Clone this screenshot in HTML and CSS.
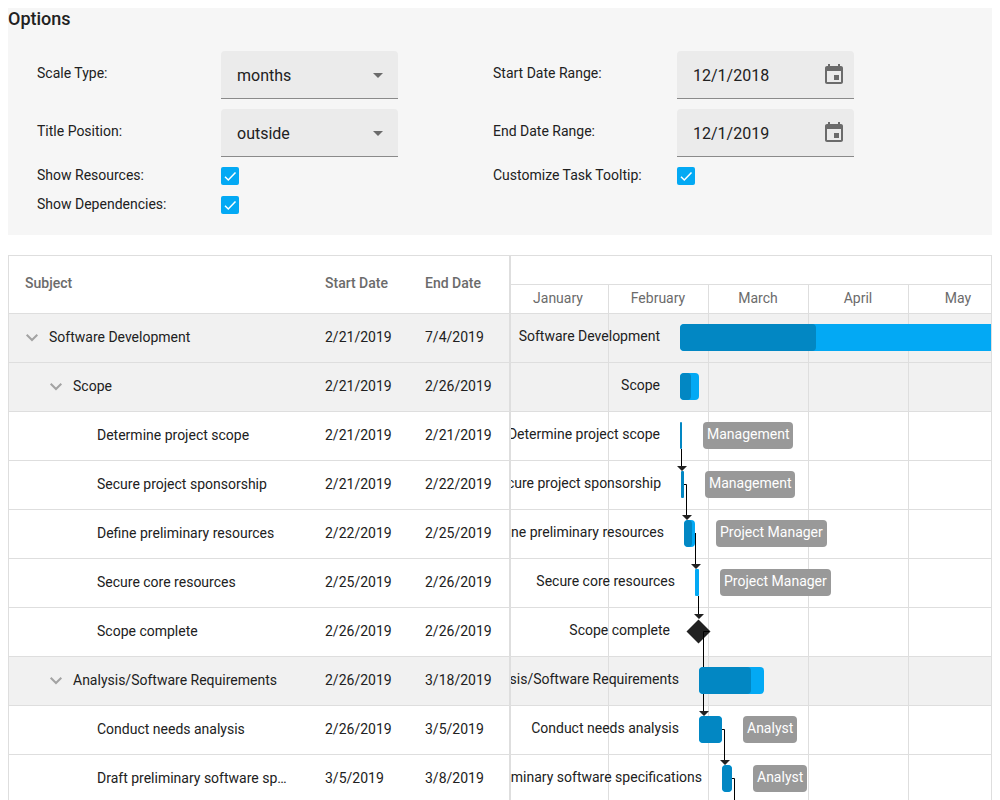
FILE: index.html
```html
<!DOCTYPE html>
<html lang="en">
<head>
<meta charset="utf-8">
<meta name="viewport" content="width=device-width, initial-scale=1">
<title>Gantt</title>
<link rel="stylesheet" href="styles.css">
</head>
<body>
<svg class="defs" aria-hidden="true">
  <symbol id="event" viewBox="0 0 24 24"><path d="M17 12h-5v5h5v-5zM16 1v2H8V1H6v2H5c-1.11 0-1.99.9-1.99 2L3 19c0 1.1.89 2 2 2h14c1.1 0 2-.9 2-2V5c0-1.100-.9-2-2-2h-1V1h-2zm3 18H5V8h14v11z"/></symbol>
  <symbol id="drop" viewBox="0 0 10 5"><path d="M0 0h10L5 5z"/></symbol>
  <symbol id="check" viewBox="0 0 18 18"><path d="M4 9.700l3.300 3.300L14.500 5.500" fill="none" stroke="#fff" stroke-width="1.500"/></symbol>
  <symbol id="chevron" viewBox="0 0 14 14"><path d="M1.700 3.700L7 9l5.300-5.300" fill="none" stroke="#a3a3a3" stroke-width="2"/></symbol>
</svg>

<form class="options">
  <h1 class="options-title">Options</h1>
  <div class="options-columns">
    <div class="options-column">
      <div class="option">
        <label class="option-label" for="scale">Scale Type:</label>
        <div class="field">
          <select class="field-input" id="scale"><option>months</option></select>
          <svg class="drop-icon"><use href="#drop"/></svg>
        </div>
      </div>
      <div class="option">
        <label class="option-label" for="position">Title Position:</label>
        <div class="field">
          <select class="field-input" id="position"><option>outside</option></select>
          <svg class="drop-icon"><use href="#drop"/></svg>
        </div>
      </div>
      <div class="option option-check">
        <label class="option-label" for="resources">Show Resources:</label>
        <span class="check"><input class="check-input" type="checkbox" id="resources" checked><svg class="check-icon"><use href="#check"/></svg></span>
      </div>
      <div class="option option-check">
        <label class="option-label" for="dependencies">Show Dependencies:</label>
        <span class="check"><input class="check-input" type="checkbox" id="dependencies" checked><svg class="check-icon"><use href="#check"/></svg></span>
      </div>
    </div>
    <div class="options-column">
      <div class="option">
        <label class="option-label" for="start">Start Date Range:</label>
        <div class="field">
          <input class="field-input" id="start" type="text" value="12/1/2018">
          <button class="date-button" type="button" aria-label="Pick start date"><svg class="date-icon"><use href="#event"/></svg></button>
        </div>
      </div>
      <div class="option">
        <label class="option-label" for="end">End Date Range:</label>
        <div class="field">
          <input class="field-input" id="end" type="text" value="12/1/2019">
          <button class="date-button" type="button" aria-label="Pick end date"><svg class="date-icon"><use href="#event"/></svg></button>
        </div>
      </div>
      <div class="option option-check">
        <label class="option-label" for="tooltip">Customize Task Tooltip:</label>
        <span class="check"><input class="check-input" type="checkbox" id="tooltip" checked><svg class="check-icon"><use href="#check"/></svg></span>
      </div>
    </div>
  </div>
</form>

<main class="gantt">
  <div class="tree">
    <table class="tree-table">
      <thead>
        <tr><th class="col-subject">Subject</th><th class="col-date">Start Date</th><th class="col-date">End Date</th></tr>
      </thead>
      <tbody>
        <tr class="group"><td><div class="subject"><button class="toggle" type="button" aria-label="Collapse"><svg class="toggle-icon"><use href="#chevron"/></svg></button>Software Development</div></td><td>2/21/2019</td><td>7/4/2019</td></tr>
        <tr class="group"><td><div class="subject level-1"><button class="toggle" type="button" aria-label="Collapse"><svg class="toggle-icon"><use href="#chevron"/></svg></button>Scope</div></td><td>2/21/2019</td><td>2/26/2019</td></tr>
        <tr><td><div class="subject leaf">Determine project scope</div></td><td>2/21/2019</td><td>2/21/2019</td></tr>
        <tr><td><div class="subject leaf">Secure project sponsorship</div></td><td>2/21/2019</td><td>2/22/2019</td></tr>
        <tr><td><div class="subject leaf">Define preliminary resources</div></td><td>2/22/2019</td><td>2/25/2019</td></tr>
        <tr><td><div class="subject leaf">Secure core resources</div></td><td>2/25/2019</td><td>2/26/2019</td></tr>
        <tr><td><div class="subject leaf">Scope complete</div></td><td>2/26/2019</td><td>2/26/2019</td></tr>
        <tr class="group"><td><div class="subject level-1"><button class="toggle" type="button" aria-label="Collapse"><svg class="toggle-icon"><use href="#chevron"/></svg></button>Analysis/Software Requirements</div></td><td>2/26/2019</td><td>3/18/2019</td></tr>
        <tr><td><div class="subject leaf">Conduct needs analysis</div></td><td>2/26/2019</td><td>3/5/2019</td></tr>
        <tr><td><div class="subject leaf">Draft preliminary software specifications</div></td><td>3/5/2019</td><td>3/8/2019</td></tr>
      </tbody>
    </table>
  </div>
  <section class="chart">
    <div class="scale-top"></div>
    <div class="scale-months">
      <span class="month">January</span><span class="month">February</span><span class="month">March</span><span class="month">April</span><span class="month">May</span>
    </div>
    <div class="tasks">
      <div class="task group" style="--x:169px"><span class="task-title">Software Development</span><div class="bar" style="width:420px"><div class="progress" style="width:136px"></div></div></div>
      <div class="task group" style="--x:169px"><span class="task-title">Scope</span><div class="bar" style="width:19px"><div class="progress" style="width:11px"></div></div></div>
      <div class="task" style="--x:169px"><span class="task-title">Determine project scope</span><div class="bar thin" style="width:2px"><div class="progress" style="width:2px"></div></div><span class="resource" style="left:192px">Management</span></div>
      <div class="task" style="--x:170px"><span class="task-title">Secure project sponsorship</span><div class="bar thin" style="width:3px"><div class="progress" style="width:3px"></div></div><span class="resource" style="left:194px">Management</span></div>
      <div class="task" style="--x:173px"><span class="task-title">Define preliminary resources</span><div class="bar" style="width:11px"><div class="progress" style="width:8px"></div></div><span class="resource" style="left:205px">Project Manager</span></div>
      <div class="task" style="--x:184px"><span class="task-title">Secure core resources</span><div class="bar thin" style="width:4px"></div><span class="resource" style="left:209px">Project Manager</span></div>
      <div class="task" style="--x:179px"><span class="task-title">Scope complete</span><div class="milestone"></div></div>
      <div class="task group" style="--x:188px"><span class="task-title">Analysis/Software Requirements</span><div class="bar" style="width:65px"><div class="progress" style="width:52px"></div></div></div>
      <div class="task" style="--x:188px"><span class="task-title">Conduct needs analysis</span><div class="bar" style="width:23px"><div class="progress" style="width:23px"></div></div><span class="resource" style="left:232px">Analyst</span></div>
      <div class="task" style="--x:211px"><span class="task-title">Draft preliminary software specifications</span><div class="bar" style="width:10px"><div class="progress" style="width:10px"></div></div><span class="resource" style="left:242px">Analyst</span></div>
      <svg class="links" width="480" height="490" aria-hidden="true">
        <path class="link" d="M170.500 135v18M173 170.500h2.500v31M184.500 219v31M187.500 282v18M198 317.500h-5.500v80M211 415.500h2.500v31M221 464.500h2.500v26"/>
        <path class="arrow" d="M166 152h10l-5 5zM171 201h10l-5 5zM180 250h10l-5 5zM183 300h10l-5 5zM188 397h10l-5 5zM209 446h10l-5 5z"/>
      </svg>
    </div>
  </section>
</main>
</body>
</html>
```

FILE: styles.css
```css
* {
  box-sizing: border-box;
}

body {
  display: flex;
  flex-direction: column;
  gap: 20px;
  height: 100vh;
  margin: 0;
  padding: 8px 8px 0;
  overflow: hidden;
  background: #fff;
  color: #212121;
  font: 14px/20px Roboto, "Liberation Sans", sans-serif;
}

.defs {
  position: absolute;
  width: 0;
  height: 0;
}

.options {
  flex: none;
  padding-bottom: 20px;
  background: #f6f6f6;
}

.options-title {
  margin: 0 0 21px;
  font-size: 18px;
  font-weight: 500;
  line-height: 22px;
}

.options-columns {
  display: flex;
  padding-left: 29px;
}

.options-column {
  display: flex;
  flex-direction: column;
  gap: 10px;
  width: 456px;
}

.option {
  display: flex;
  align-items: center;
  height: 48px;
}

.option-label {
  width: 184px;
  padding-bottom: 4px;
}

.option-check {
  align-items: flex-start;
  height: 19px;
}

.option-check .option-label {
  padding: 0;
  line-height: 16px;
}

.field {
  position: relative;
  display: flex;
  align-items: center;
  width: 177px;
  height: 48px;
  border-bottom: 1px solid #8a8a8a;
  border-radius: 4px 4px 0 0;
  background: #ebebeb;
}

.field-input {
  flex: 1;
  min-width: 0;
  height: 100%;
  padding: 2px 0 0 16px;
  border: 0;
  background: transparent;
  color: inherit;
  font: inherit;
  font-size: 16px;
  appearance: none;
}

.drop-icon {
  position: absolute;
  top: 22px;
  right: 15px;
  width: 10px;
  height: 5px;
  fill: #6b6b6b;
  pointer-events: none;
}

.date-button {
  display: flex;
  margin-right: 8px;
  padding: 0;
  border: 0;
  background: none;
}

.date-icon {
  width: 24px;
  height: 24px;
  fill: #6b6b6b;
}

.check {
  position: relative;
  display: flex;
}

.check-input {
  width: 18px;
  height: 18px;
  margin: 0;
  border-radius: 2px;
  background: #03a9f4;
  appearance: none;
}

.check-icon {
  position: absolute;
  inset: 0;
  width: 18px;
  height: 18px;
  pointer-events: none;
}

.gantt {
  display: flex;
  flex: 1;
  min-height: 0;
  overflow: hidden;
  border: 1px solid #dedede;
  border-bottom: 0;
}

.tree {
  flex: none;
  width: 502px;
  border-right: 2px solid #dedede;
}

.tree-table {
  width: 100%;
  border-collapse: separate;
  border-spacing: 0;
  table-layout: fixed;
}

.tree-table th {
  height: 58px;
  padding: 0 16px 4px;
  border-bottom: 1px solid #dedede;
  color: #6b6b6b;
  font-weight: 500;
  text-align: left;
}

.tree-table td {
  height: 49px;
  padding: 0 16px 2px;
  border-bottom: 1px solid #dedede;
}

.col-subject {
  width: 300px;
}

.col-date {
  width: 100px;
}

.group {
  background-color: #f1f1f1;
}

.subject {
  overflow: hidden;
  text-overflow: ellipsis;
  white-space: nowrap;
}

.level-1 {
  padding-left: 24px;
}

.leaf {
  padding-left: 72px;
}

.toggle {
  width: 24px;
  height: 14px;
  padding: 0;
  border: 0;
  background: none;
  text-align: left;
  vertical-align: middle;
}

.toggle-icon {
  display: block;
  width: 14px;
  height: 14px;
}

.chart {
  flex: 1;
  min-width: 0;
  overflow: hidden;
}

.scale-top {
  height: 29px;
  border-bottom: 1px solid #dedede;
}

.scale-months {
  display: flex;
  height: 29px;
  margin-left: -2px;
  border-bottom: 1px solid #dedede;
}

.month {
  flex: none;
  width: 100px;
  padding-right: 1px;
  border-right: 1px solid #dedede;
  color: #6b6b6b;
  line-height: 26px;
  text-align: center;
}

.tasks {
  position: relative;
}

.task {
  position: relative;
  height: 49px;
  border-bottom: 1px solid #dedede;
  background-image: linear-gradient(to right, transparent 99px, #dedede 99px);
  background-position: -2px 0;
  background-size: 100px 100%;
}

.task-title {
  position: absolute;
  top: 12px;
  right: calc(100% - var(--x) + 20px);
  white-space: nowrap;
}

.bar {
  position: absolute;
  z-index: 2;
  top: 10px;
  left: var(--x);
  height: 27px;
  overflow: hidden;
  border-radius: 4px;
  background: #03a9f4;
}

.thin {
  border-radius: 1px;
}

.progress {
  height: 100%;
  border-radius: 4px;
  background: #0287c3;
}

.thin .progress {
  border-radius: 0;
}

.resource {
  position: absolute;
  top: 10px;
  height: 27px;
  padding: 0 4px;
  border-radius: 4px;
  background: #999;
  color: #fff;
  line-height: 25px;
  white-space: nowrap;
}

.milestone {
  position: absolute;
  top: 15px;
  left: var(--x);
  width: 17px;
  height: 17px;
  transform: rotate(45deg);
  background: #212121;
}

.links {
  position: absolute;
  z-index: 1;
  top: 0;
  left: 0;
}

.link {
  fill: none;
  stroke: #000;
}

.arrow {
  fill: #212121;
}
```
